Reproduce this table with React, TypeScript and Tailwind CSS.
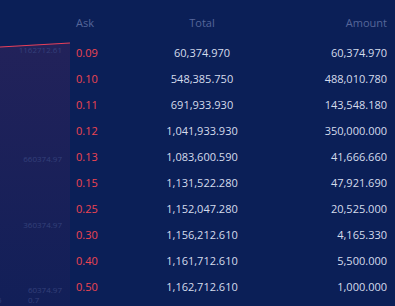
import React from 'react';

interface AskRow {
  price: string;
  total: string;
  amount: string;
}

const rows: AskRow[] = [
  { price: '0.09', total: '60,374.970', amount: '60,374.970' },
  { price: '0.10', total: '548,385.750', amount: '488,010.780' },
  { price: '0.11', total: '691,933.930', amount: '143,548.180' },
  { price: '0.12', total: '1,041,933.930', amount: '350,000.000' },
  { price: '0.13', total: '1,083,600.590', amount: '41,666.660' },
  { price: '0.15', total: '1,131,522.280', amount: '47,921.690' },
  { price: '0.25', total: '1,152,047.280', amount: '20,525.000' },
  { price: '0.30', total: '1,156,212.610', amount: '4,165.330' },
  { price: '0.40', total: '1,161,712.610', amount: '5,500.000' },
  { price: '0.50', total: '1,162,712.610', amount: '1,000.000' },
];

const DepthChart = () => (
  <div className="relative w-[70px] h-full shrink-0 overflow-hidden">
    <svg width="70" height="306" className="absolute left-0 top-0">
      <defs>
        <linearGradient id="askFill" x1="0" y1="0" x2="0" y2="1">
          <stop offset="0%" stopColor="#22225a" />
          <stop offset="100%" stopColor="#121f58" />
        </linearGradient>
      </defs>
      <polygon points="0,47 70,43 70,306 0,306" fill="url(#askFill)" />
      <polyline points="0,47 70,43" fill="none" stroke="#e8405a" strokeWidth="1.2" />
    </svg>
    <span className="absolute right-[8px] top-[45px] text-[8px] leading-[10px] text-[#34407a]">1162712.61</span>
    <span className="absolute right-[8px] top-[154px] text-[8px] leading-[10px] text-[#34407a]">660374.97</span>
    <span className="absolute right-[8px] top-[220px] text-[8px] leading-[10px] text-[#34407a]">360374.97</span>
    <span className="absolute right-[8px] top-[285px] text-[8px] leading-[10px] text-[#34407a]">60374.97</span>
    <span className="absolute left-[28px] top-[295px] text-[8px] leading-[10px] text-[#34407a]">0.7</span>
    <span className="absolute left-[-3px] top-[295px] text-[8px] leading-[10px] text-[#34407a]">5</span>
  </div>
);

const App = () => {
  return (
    <div
      className="flex w-[395px] h-[306px] bg-[#0b1f57] overflow-hidden"
      style={{ fontFamily: '"Open Sans", sans-serif' }}
    >
      <DepthChart />
      <div className="flex-1 pl-[6px] pr-[8px] pt-[10px] text-[11px]">
        <div className="grid grid-cols-[60px_1fr_130px] h-[26px] items-center text-[#56669a]">
          <span>Ask</span>
          <span className="text-center pl-[11px]">Total</span>
          <span className="text-right">Amount</span>
        </div>
        <div className="pt-[4px]">
          {rows.map((row) => (
            <div key={row.price} className="grid grid-cols-[60px_1fr_130px] h-[26px] items-center">
              <span className="text-[#ee4552]">{row.price}</span>
              <span className="text-center pl-[11px] text-[#d5dcec]">{row.total}</span>
              <span className="text-right text-[#d5dcec]">{row.amount}</span>
            </div>
          ))}
        </div>
      </div>
    </div>
  );
};

export default App;
